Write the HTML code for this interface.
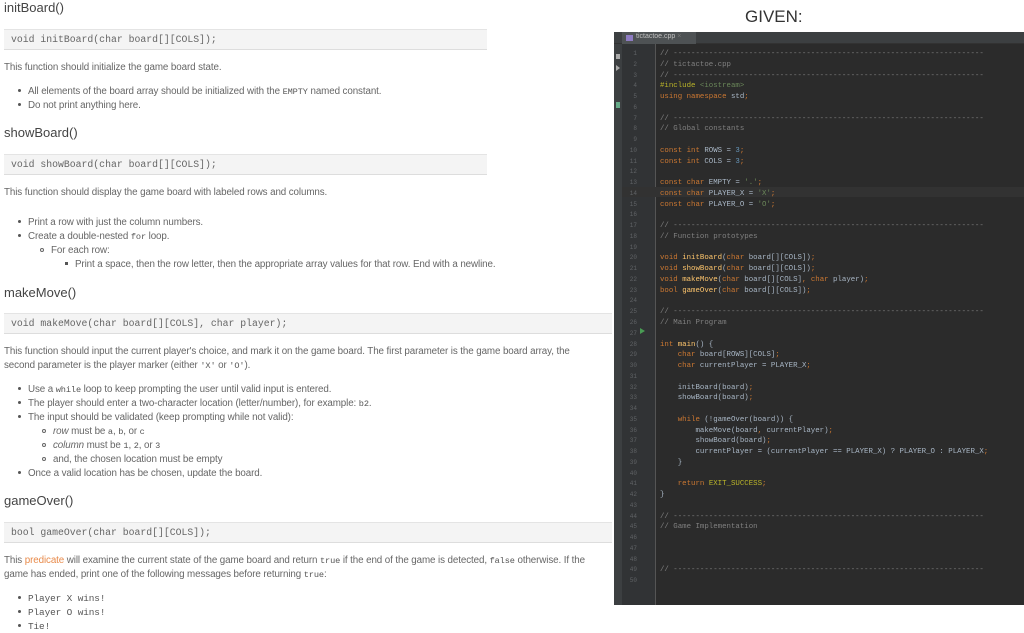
<!DOCTYPE html>
<html><head><meta charset="utf-8"><style>
*{margin:0;padding:0;box-sizing:border-box}
body{width:1024px;height:632px;background:#fff;position:relative;overflow:hidden;font-family:"Liberation Sans",sans-serif;color:#555}
.a{position:absolute;white-space:nowrap}
.h{font-size:13px;color:#444;line-height:16px}
.t{font-size:9.8px;line-height:12px;color:#666;letter-spacing:-0.1px;margin-top:1.5px}
.m{font-family:"Liberation Mono",monospace;font-size:8.6px;color:#555}
.ml{font-family:"Liberation Mono",monospace;font-size:9.4px;color:#555}
.box{position:absolute;left:4px;background:#f4f4f4;border-top:1px solid #e4e4e4;border-bottom:1px solid #ddd;font-family:"Liberation Mono",monospace;font-size:9.8px;color:#666;padding-left:7px;line-height:20px}
.dot{display:inline-block;width:3px;height:3px;border-radius:50%;background:#555;margin-right:7px;vertical-align:middle}
.cir{display:inline-block;width:4px;height:4px;border-radius:50%;border:1px solid #666;margin-right:7px;vertical-align:middle}
.sq{display:inline-block;width:3px;height:3px;background:#555;margin-right:7px;vertical-align:middle}
.or{color:#e88a4a}
#ed{position:absolute;left:614px;top:32px;width:410px;height:573px;background:#2b2b2b;overflow:hidden}
.c{position:absolute;left:46px;font-family:"Liberation Mono",monospace;font-size:7.4px;color:#a9b7c6;white-space:pre;line-height:10px}
.n{position:absolute;left:9px;width:14px;text-align:right;font-family:"Liberation Mono",monospace;font-size:6px;color:#606366;line-height:10px}
.k{color:#cc7832}.cm{color:#808080}.s{color:#6a8759}.nu{color:#6897bb}.f{color:#ffc66d}.y{color:#bbb529}
</style></head><body>
<div class="a h" style="left:4px;top:0px">initBoard()</div>
<div class="box" style="top:29px;width:483px;height:21px">void initBoard(char board[][COLS]);</div>
<div class="a t" style="left:4px;top:60px">This function should initialize the game board state.</div>
<div class="a t" style="left:18px;top:84px"><span class="dot"></span>All elements of the board array should be initialized with the <span class="m">EMPTY</span> named constant.</div>
<div class="a t" style="left:18px;top:98px"><span class="dot"></span>Do not print anything here.</div>
<div class="a h" style="left:4px;top:125px">showBoard()</div>
<div class="box" style="top:154px;width:483px;height:21px">void showBoard(char board[][COLS]);</div>
<div class="a t" style="left:4px;top:185px">This function should display the game board with labeled rows and columns.</div>
<div class="a t" style="left:18px;top:215px"><span class="dot"></span>Print a row with just the column numbers.</div>
<div class="a t" style="left:18px;top:229px"><span class="dot"></span>Create a double-nested <span class="m">for</span> loop.</div>
<div class="a t" style="left:40px;top:243px"><span class="cir"></span>For each row:</div>
<div class="a t" style="left:65px;top:257px"><span class="sq"></span>Print a space, then the row letter, then the appropriate array values for that row. End with a newline.</div>
<div class="a h" style="left:4px;top:285px">makeMove()</div>
<div class="box" style="top:313px;width:608px;height:21px">void makeMove(char board[][COLS], char player);</div>
<div class="a t" style="left:4px;top:344px">This function should input the current player's choice, and mark it on the game board. The first parameter is the game board array, the</div>
<div class="a t" style="left:4px;top:358px">second parameter is the player marker (either <span class="m">'X'</span> or <span class="m">'O'</span>).</div>
<div class="a t" style="left:18px;top:382px"><span class="dot"></span>Use a <span class="m">while</span> loop to keep prompting the user until valid input is entered.</div>
<div class="a t" style="left:18px;top:396px"><span class="dot"></span>The player should enter a two-character location (letter/number), for example: <span class="m">b2</span>.</div>
<div class="a t" style="left:18px;top:410px"><span class="dot"></span>The input should be validated (keep prompting while not valid):</div>
<div class="a t" style="left:42px;top:424px"><span class="cir"></span><i>row</i> must be <span class="m">a</span>, <span class="m">b</span>, or <span class="m">c</span></div>
<div class="a t" style="left:42px;top:438px"><span class="cir"></span><i>column</i> must be <span class="m">1</span>, <span class="m">2</span>, or <span class="m">3</span></div>
<div class="a t" style="left:42px;top:452px"><span class="cir"></span>and, the chosen location must be empty</div>
<div class="a t" style="left:18px;top:466px"><span class="dot"></span>Once a valid location has be chosen, update the board.</div>
<div class="a h" style="left:4px;top:493px">gameOver()</div>
<div class="box" style="top:522px;width:608px;height:21px">bool gameOver(char board[][COLS]);</div>
<div class="a t" style="left:4px;top:553px">This <span class="or">predicate</span> will examine the current state of the game board and return <span class="m">true</span> if the end of the game is detected, <span class="m">false</span> otherwise. If the</div>
<div class="a t" style="left:4px;top:567px">game has ended, print one of the following messages before returning <span class="m">true</span>:</div>
<div class="a t" style="left:18px;top:591px"><span class="dot"></span><span class="ml">Player X wins!</span></div>
<div class="a t" style="left:18px;top:605px"><span class="dot"></span><span class="ml">Player O wins!</span></div>
<div class="a t" style="left:18px;top:619px"><span class="dot"></span><span class="ml">Tie!</span></div>
<div style="position:absolute;left:612px;top:0;width:2px;height:632px;background:#fff"></div>

<div class="a" style="left:745px;top:7px;font-size:17px;color:#333">GIVEN:</div>

<div id="ed">
<div style="position:absolute;left:0;top:0;width:410px;height:12px;background:#3c3f41;border-bottom:1px solid #323232"></div>
<div style="position:absolute;left:8px;top:0;width:74px;height:12px;background:#4e5254"></div>
<div class="a" style="left:12px;top:3px;width:7px;height:6px;background:#8e7cc3"></div>
<div class="a" style="left:22px;top:1px;font-size:7px;color:#c0c0c0">tictactoe.cpp <span style="color:#777">×</span></div>
<div style="position:absolute;left:0;top:12px;width:8px;height:561px;background:#3c3f41"></div>
<div class="a" style="left:2px;top:22px;width:4px;height:5px;background:#aaa"></div>
<div class="a" style="left:2px;top:33px;width:0;height:0;border-left:4px solid #aaa;border-top:3px solid transparent;border-bottom:3px solid transparent"></div>
<div class="a" style="left:2px;top:70px;width:4px;height:6px;background:#6a8"></div>
<div style="position:absolute;left:8px;top:12px;width:33px;height:561px;background:#313335"></div>
<div style="position:absolute;left:41px;top:12px;width:1px;height:561px;background:#555"></div>
<div style="position:absolute;left:8px;top:155px;width:402px;height:10px;background:#323232"></div>
<div class="a" style="left:26px;top:296px;width:0;height:0;border-left:5px solid #499c54;border-top:3.5px solid transparent;border-bottom:3.5px solid transparent"></div>
<div id="code"></div>
</div>
<script>
var D='// ----------------------------------------------------------------------';
var L=[
'<span class="cm">'+D+'</span>',
'<span class="cm">// tictactoe.cpp</span>',
'<span class="cm">'+D+'</span>',
'<span class="y">#include</span> <span class="s">&lt;iostream&gt;</span>',
'<span class="k">using namespace</span> std<span class="k">;</span>',
'',
'<span class="cm">'+D+'</span>',
'<span class="cm">// Global constants</span>',
'',
'<span class="k">const int</span> ROWS = <span class="nu">3</span><span class="k">;</span>',
'<span class="k">const int</span> COLS = <span class="nu">3</span><span class="k">;</span>',
'',
'<span class="k">const char</span> EMPTY = <span class="s">\'.\'</span><span class="k">;</span>',
'<span class="k">const char</span> PLAYER_X = <span class="s">\'X\'</span><span class="k">;</span>',
'<span class="k">const char</span> PLAYER_O = <span class="s">\'O\'</span><span class="k">;</span>',
'',
'<span class="cm">'+D+'</span>',
'<span class="cm">// Function prototypes</span>',
'',
'<span class="k">void</span> <span class="f">initBoard</span>(<span class="k">char</span> board[][COLS])<span class="k">;</span>',
'<span class="k">void</span> <span class="f">showBoard</span>(<span class="k">char</span> board[][COLS])<span class="k">;</span>',
'<span class="k">void</span> <span class="f">makeMove</span>(<span class="k">char</span> board[][COLS]<span class="k">, char</span> player)<span class="k">;</span>',
'<span class="k">bool</span> <span class="f">gameOver</span>(<span class="k">char</span> board[][COLS])<span class="k">;</span>',
'',
'<span class="cm">'+D+'</span>',
'<span class="cm">// Main Program</span>',
'',
'<span class="k">int</span> <span class="f">main</span>() {',
'    <span class="k">char</span> board[ROWS][COLS]<span class="k">;</span>',
'    <span class="k">char</span> currentPlayer = PLAYER_X<span class="k">;</span>',
'',
'    initBoard(board)<span class="k">;</span>',
'    showBoard(board)<span class="k">;</span>',
'',
'    <span class="k">while</span> (!gameOver(board)) {',
'        makeMove(board<span class="k">,</span> currentPlayer)<span class="k">;</span>',
'        showBoard(board)<span class="k">;</span>',
'        currentPlayer = (currentPlayer == PLAYER_X) ? PLAYER_O : PLAYER_X<span class="k">;</span>',
'    }',
'',
'    <span class="k">return</span> <span class="y">EXIT_SUCCESS</span><span class="k">;</span>',
'}',
'',
'<span class="cm">'+D+'</span>',
'<span class="cm">// Game Implementation</span>',
'','','',
'<span class="cm">'+D+'</span>',
''];
var h='';
for(var i=0;i<L.length;i++){var t=17+i*10.76;h+='<div class="n" style="top:'+t+'px">'+(i+1)+'</div><div class="c" style="top:'+t+'px">'+L[i]+'</div>';}
document.getElementById('code').innerHTML=h;
</script>
</body></html>
